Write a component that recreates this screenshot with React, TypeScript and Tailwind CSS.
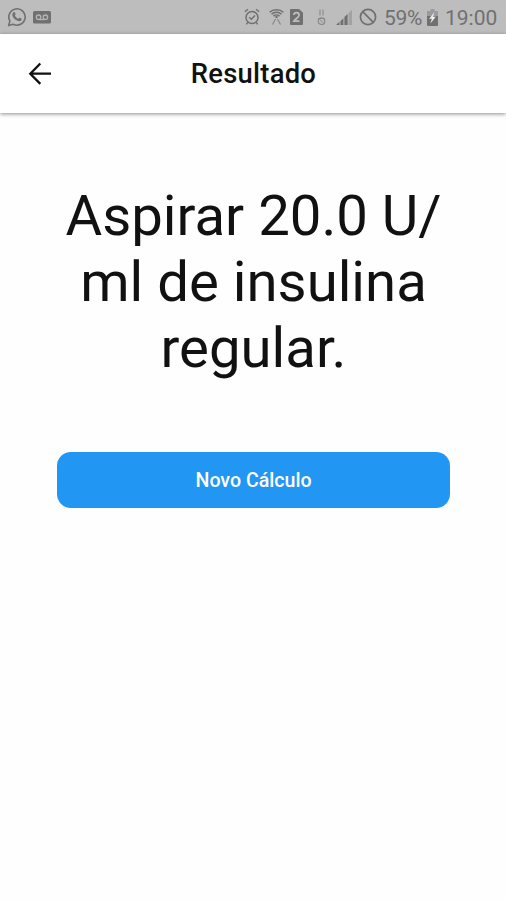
import type { ReactNode } from "react";

const result = "Aspirar 20.0 U/ ml de insulina regular.";

// ─── Status bar icons ─────────────────────────────────────────
function WhatsAppIcon() {
  return (
    <svg className="w-5 h-5" viewBox="0 0 20 20" fill="none">
      <path
        d="M1.6 18.6l1.3-4.5a8.2 8.2 0 1 1 3.2 3.1z"
        stroke="currentColor"
        strokeWidth="1.6"
        strokeLinejoin="round"
      />
      <path
        d="M6.2 5.6c.8-.8 1.5-.6 1.8.1l.6 1.4c.2.5-.5 1-.8 1.4.9 1.6 1.9 2.6 3.5 3.3.4-.4.9-1.2 1.4-1l1.6.8c.6.3.4 1.3-.2 1.9-1 .9-2.3.9-4 .1-2.2-1.1-3.7-2.7-4.5-4.7-.5-1.3-.2-2.5.6-3.3z"
        fill="currentColor"
      />
    </svg>
  );
}

function VoicemailIcon() {
  return (
    <svg className="w-[18px] h-[13px]" viewBox="0 0 18 13" fill="none">
      <rect width="18" height="12.5" rx="1.5" fill="currentColor" />
      <circle cx="5.6" cy="6.2" r="2.2" stroke="#b4b4b4" strokeWidth="1.3" />
      <circle cx="12.4" cy="6.2" r="2.2" stroke="#b4b4b4" strokeWidth="1.3" />
      <path d="M5.6 8.6h6.8" stroke="#b4b4b4" strokeWidth="1.2" />
    </svg>
  );
}

function AlarmIcon() {
  return (
    <svg className="w-4 h-[18px]" viewBox="0 0 16 18" fill="none" stroke="currentColor">
      <circle cx="8" cy="9.5" r="6" strokeWidth="1.5" />
      <path d="M.8 3.8L4 1.2M12 1.2l3.2 2.6M3.8 14.3l-1.4 2M12.2 14.3l1.4 2" strokeWidth="1.4" />
      <path d="M5.2 9.2l2.2 2.1 3.6-3.9" strokeWidth="1.5" />
    </svg>
  );
}

function HotspotIcon() {
  return (
    <svg className="w-[15px] h-[18px]" viewBox="0 0 15 18" fill="none" stroke="currentColor">
      <path
        d="M.6 4.3C4.2.8 10.8.8 14.4 4.3M2.5 6.2c2.7-2.7 7.3-2.7 10 0M4.5 8.1c1.6-1.5 4.4-1.5 6 0"
        strokeWidth="1.5"
      />
      <circle cx="7.5" cy="8.9" r="1.2" fill="currentColor" stroke="none" />
      <path d="M6.5 11L3.5 16.5M8.5 11l3 5.5" strokeWidth="1.2" opacity=".7" />
    </svg>
  );
}

function SimIcon() {
  return (
    <svg className="w-[13px] h-4" viewBox="0 0 13 16" fill="none">
      <path d="M1 0h8l4 3.8V15a1 1 0 0 1-1 1H1a1 1 0 0 1-1-1V1a1 1 0 0 1 1-1z" fill="currentColor" />
      <path d="M3.9 6c.1-3.2 5.2-3.1 5.2 0 0 2.3-3.6 3.7-5.2 6.2h5.5" stroke="#bdbdbd" strokeWidth="1.7" />
    </svg>
  );
}

function DataIcon() {
  return (
    <svg className="w-[9px] h-[17px]" viewBox="0 0 9 17" fill="none" stroke="currentColor" opacity=".65">
      <path d="M3 .5v6M6 .5v6" strokeWidth="1.1" />
      <circle cx="4.5" cy="12.2" r="3.3" strokeWidth="1.2" />
      <path d="M1 9.5h7M2.4 10.2l4.2 4" strokeWidth="1" />
    </svg>
  );
}

function SignalIcon() {
  return (
    <svg className="w-[17px] h-[17px]" viewBox="0 0 17 17" fill="currentColor">
      <path d="M0 16l3.5-3.3V16z" />
      <path d="M4.5 11.9l2.9-2.7V16H4.5z" />
      <path d="M8.4 8l3.2-3v11H8.4z" />
      <path d="M12.6 3.9L16 .8V16h-3.4z" opacity=".35" />
    </svg>
  );
}

function BlockedIcon() {
  return (
    <svg className="w-[18px] h-[18px]" viewBox="0 0 18 18" fill="none" stroke="currentColor">
      <circle cx="9" cy="9" r="7.6" strokeWidth="1.7" />
      <path d="M3.7 3.7l10.6 10.6" strokeWidth="1.7" />
    </svg>
  );
}

function BatteryIcon() {
  return (
    <svg className="w-[11px] h-[17px]" viewBox="0 0 11 17" fill="currentColor">
      <path d="M3.5 0h4v2H11v5H0V2h3.5z" opacity=".45" />
      <path d="M0 7h11v9a1 1 0 0 1-1 1H1a1 1 0 0 1-1-1z" />
      <path d="M7.5 3L2.2 9.8h2.7l-1.5 4.7 5.4-6.7H6z" fill="#eeeeee" />
    </svg>
  );
}

// ─── StatusBar ────────────────────────────────────────────────
function StatusBar() {
  return (
    <div className="h-[34px] bg-[#bdbdbd] text-[#707070] flex items-center pl-[7px] pr-[9px]">
      <WhatsAppIcon />
      <span className="ml-[6px]">
        <VoicemailIcon />
      </span>
      <div className="ml-auto flex items-center">
        <AlarmIcon />
        <span className="ml-[9px]">
          <HotspotIcon />
        </span>
        <span className="ml-[6px]">
          <SimIcon />
        </span>
        <span className="ml-[14px]">
          <DataIcon />
        </span>
        <span className="ml-[10px]">
          <SignalIcon />
        </span>
        <span className="ml-[6px]">
          <BlockedIcon />
        </span>
        <span className="ml-[7px] w-[38px] pt-px text-[21px] leading-6 tracking-[-0.3px] whitespace-nowrap">
          59%
        </span>
        <span className="ml-[5px]">
          <BatteryIcon />
        </span>
        <span className="ml-[7px] w-[52px] pt-px text-[21px] leading-6 whitespace-nowrap">19:00</span>
      </div>
    </div>
  );
}

// ─── AppBar ───────────────────────────────────────────────────
function AppBar({ children }: { children: ReactNode }) {
  return (
    <header className="relative h-[79px] bg-white flex items-center px-7 shadow-[0_1px_4px_rgba(0,0,0,0.45)]">
      <button className="w-6 h-6" aria-label="Voltar">
        <svg className="w-6 h-6" viewBox="0 0 24 24" fill="none" stroke="currentColor" strokeWidth="2.3">
          <path d="M23 11.7H2.5M12.3 1.5L2.3 11.7l10 10.2" />
        </svg>
      </button>
      <h1 className="flex-1 mr-6 pt-px pl-px text-center text-[27.4px] leading-8 font-medium tracking-[0.25px]">
        {children}
      </h1>
    </header>
  );
}

export default function App() {
  return (
    <div className="min-h-screen bg-[#fefefe] text-[#111111] font-[Roboto,sans-serif]">
      <StatusBar />
      <AppBar>Resultado</AppBar>
      <main className="px-14 pt-[70px]">
        <p className="pl-px text-center text-[56.3px] leading-[66px]">{result}</p>
        <button className="mt-[71px] ml-px w-[393px] h-14 pt-px rounded-[14px] bg-[#2196f3] text-white text-[19.6px] font-medium">
          Novo Cálculo
        </button>
      </main>
    </div>
  );
}
